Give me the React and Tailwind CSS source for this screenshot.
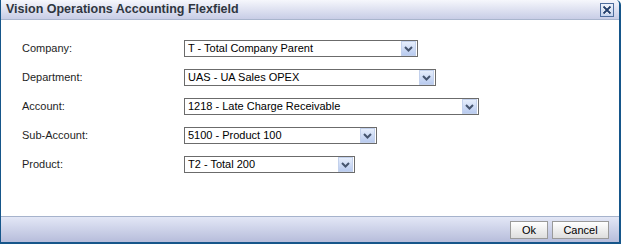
import React from 'react';

// Flexfield dialog: title bar, five segment selects, Ok / Cancel footer

const segments = [
  { label: 'Company:', value: 'T - Total Company Parent', width: 'w-[234px]' },
  { label: 'Department:', value: 'UAS - UA Sales OPEX', width: 'w-[252px]' },
  { label: 'Account:', value: '1218 - Late Charge Receivable', width: 'w-[295px]' },
  { label: 'Sub-Account:', value: '5100 - Product 100', width: 'w-[193px]' },
  { label: 'Product:', value: 'T2 - Total 200', width: 'w-[171px]' },
];

const Chevron = () => (
  <svg width="9" height="6" viewBox="0 0 9 6">
    <path d="M1 1 L4.5 4.5 L8 1" fill="none" stroke="#46556f" strokeWidth="2" />
  </svg>
);

const CloseIcon = () => (
  <svg width="14" height="14" viewBox="0 0 14 14">
    <defs>
      <linearGradient id="cg" x1="0" y1="0" x2="0" y2="1">
        <stop offset="0" stopColor="#eef3fc" />
        <stop offset="1" stopColor="#c3d2ee" />
      </linearGradient>
    </defs>
    <rect x="0.5" y="0.5" width="13" height="13" fill="url(#cg)" stroke="#4d6c9c" />
    <path d="M3.5 3.5 L10.5 10.5 M10.5 3.5 L3.5 10.5" stroke="#ffffff" strokeWidth="3.4" />
    <path d="M3.5 3.5 L10.5 10.5 M10.5 3.5 L3.5 10.5" stroke="#24406e" strokeWidth="2" />
  </svg>
);

const Select = ({ value, width }) => (
  <div className={`${width} h-[17px] flex items-center border border-[#6b6b6b] bg-white`}>
    <span className="flex-1 pl-[3px] text-[11px] leading-none text-black truncate">{value}</span>
    <div className="w-[15px] h-[15px] mr-px flex items-center justify-center bg-gradient-to-b from-[#e6eefc] to-[#b9cbef] border border-[#c3d1ec]">
      <Chevron />
    </div>
  </div>
);

const Button = ({ children, width }) => (
  <button className={`${width} h-[18px] flex items-center justify-center border border-[#9a9a9a] bg-gradient-to-b from-[#ffffff] to-[#dedede] text-[11px] leading-none text-black`}>
    {children}
  </button>
);

export default function App() {
  return (
    <div className="w-[624px] h-[244px] bg-white font-['Liberation_Sans',Arial,sans-serif]">
      <div className="w-[621px] h-[244px] flex flex-col border-l border-r-2 border-b-2 border-[#16568a] rounded-tr-[5px] overflow-hidden">
        {/* Title bar */}
        <div className="h-[20px] flex items-center justify-between pl-[5px] pr-[5px] bg-gradient-to-b from-[#f6f7fc] to-[#c8cde6] border-b border-[#a9b5cd]">
          <span className="text-[12.5px] font-bold text-[#2f3640] leading-none">Vision Operations Accounting Flexfield</span>
          <CloseIcon />
        </div>

        {/* Segments */}
        <div className="flex-1 flex flex-col gap-[12px] pt-[20px] pl-[21px]">
          {segments.map((s) => (
            <div key={s.label} className="flex items-center h-[17px]">
              <span className="w-[162px] text-[11px] leading-none text-[#1e1e1e]">{s.label}</span>
              <Select value={s.value} width={s.width} />
            </div>
          ))}
        </div>

        {/* Footer */}
        <div className="h-[26px] flex items-center justify-end gap-[4px] pr-[10px] pt-[1px] bg-gradient-to-b from-[#e3e7f6] to-[#b7bddb] border-t border-[#a6b3cc]">
          <Button width="w-[38px]">Ok</Button>
          <Button width="w-[57px]">Cancel</Button>
        </div>
      </div>
    </div>
  );
}
